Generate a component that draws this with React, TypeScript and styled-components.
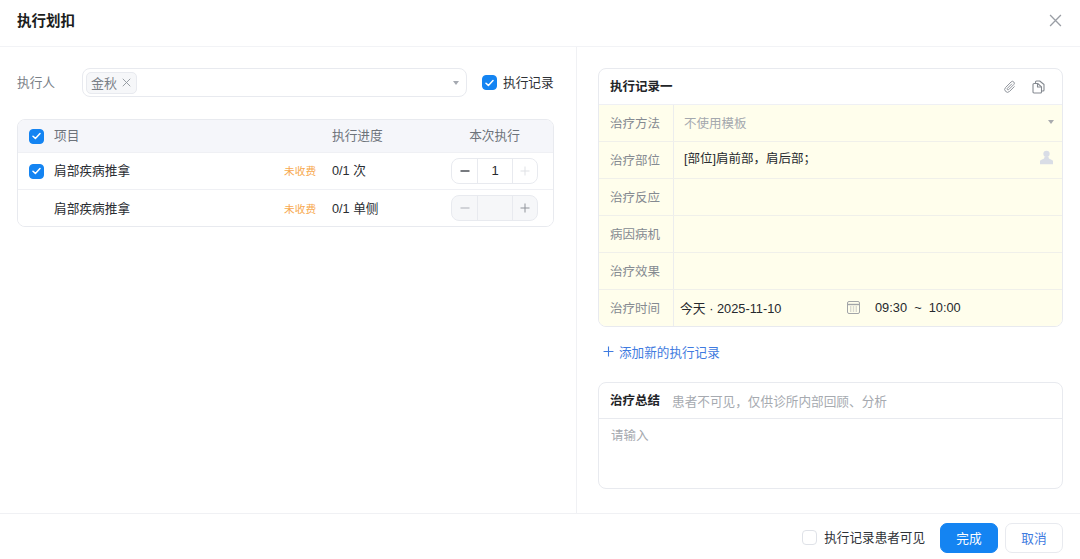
import React from "react";
import styled, { createGlobalStyle } from "styled-components";

const Global = createGlobalStyle`
  html, body { margin: 0; padding: 0; background: #fff; }
  body { font-family: "Liberation Sans", "Noto Sans CJK SC", sans-serif; font-size: 12.7px; color: #26292e; }
  * { box-sizing: border-box; }
`;

const Dialog = styled.div`
  width: 1080px; height: 559px; display: flex; flex-direction: column; overflow: hidden; background: #fff;
`;
const Header = styled.header`
  height: 47px; flex: none; display: flex; align-items: center; justify-content: space-between;
  padding: 0 18px 5px 17px; border-bottom: 1px solid #f2f3f6;
`;
const Title = styled.h1`
  margin: 0; font-size: 14.5px; line-height: 20px; font-weight: 600; color: #1b1d20;
`;
const Body = styled.main`
  flex: 1; display: flex; min-height: 0;
`;
const Left = styled.section`
  width: 577px; flex: none; padding: 21px 22px 0 17px; border-right: 1px solid #f0f1f4;
`;
const Right = styled.section`
  flex: 1; padding: 21px 17px 0 21px; display: flex; flex-direction: column;
`;
const ExecutorRow = styled.div`
  display: flex; align-items: center; height: 29px; margin-bottom: 22px;
`;
const FieldLabel = styled.span`
  width: 65px; flex: none; color: #7a8087; font-size: 12.7px; line-height: 20px;
`;
const Select = styled.div`
  width: 385px; flex: none; height: 29px; border: 1px solid #e8eaef; border-radius: 8px; display: flex; align-items: center;
  justify-content: space-between; padding: 0 7px 0 3px; margin-right: 15px;
`;
const Tag = styled.span`
  height: 22px; display: inline-flex; align-items: center; gap: 5px; padding: 0 5px 0 4px; background: #f6f7f9;
  border: 1px solid #e8eaef; border-radius: 5px; color: #7a8087; font-size: 13px;
`;
const Caret = styled.i<{ $color?: string }>`
  display: block; width: 0; height: 0; border-left: 3.5px solid transparent; border-right: 3.5px solid transparent;
  border-top: 4px solid ${p => p.$color || "#a5a9b1"};
`;
const Check = styled.span<{ $on?: boolean }>`
  width: 15px; height: 15px; flex: none; border-radius: 4px; display: inline-flex; align-items: center; justify-content: center;
  background: ${p => (p.$on ? "#1484f2" : "#fff")}; border: 1px solid ${p => (p.$on ? "#1484f2" : "#dfe2e8")};
`;
const CheckLabel = styled.label`
  display: inline-flex; align-items: center; gap: 6px; font-size: 12.7px; line-height: 20px; color: #2e3136; white-space: nowrap;
`;
const Table = styled.div`
  border: 1px solid #e8eaef; border-radius: 8px; overflow: hidden;
`;
const Row = styled.div<{ $head?: boolean }>`
  display: grid; grid-template-columns: 25px 1fr 48px 119px 102px; align-items: center; padding-left: 11px;
  height: ${p => (p.$head ? "33px" : "37px")};
  background: ${p => (p.$head ? "#f5f6fa" : "#fff")};
  color: ${p => (p.$head ? "#6d737b" : "#2a2d32")};
  font-size: 12.7px; line-height: 20px;
  border-bottom: 1px solid #eff0f4;
  &:last-child { border-bottom: 0; height: 36px; padding-top: 1px; }
`;
const Fee = styled.span`
  font-size: 10.7px; color: #f7a94f; white-space: nowrap;
`;
const HeadCenter = styled.span`
  text-align: center; padding-right: 15px; white-space: nowrap;
`;
const Stepper = styled.div<{ $off?: boolean }>`
  width: 87px; height: 26px; display: grid; grid-template-columns: 25px 36px 1fr; border: 1px solid #e8eaef; border-radius: 8px;
  overflow: hidden; background: ${p => (p.$off ? "#f6f7f9" : "#fff")}; margin-bottom: ${p => (p.$off ? "1px" : "0")};
`;
const StepCell = styled.span<{ $mid?: boolean }>`
  display: flex; align-items: center; justify-content: center; font-size: 13px; color: #26292e;
  ${p => p.$mid && "border-left: 1px solid #e8eaef; border-right: 1px solid #e8eaef;"}
`;
const Card = styled.div`
  border: 1px solid #e8eaef; border-radius: 8px; overflow: hidden; background: #fff;
`;
const CardHead = styled.div`
  height: 36px; display: flex; align-items: center; justify-content: space-between; padding: 0 17px 0 11px;
  border-bottom: 1px solid #eff0f4;
`;
const CardTitle = styled.span`
  font-size: 12.5px; font-weight: 600; line-height: 20px; color: #222428;
`;
const IconRow = styled.span`
  display: flex; gap: 15px; align-items: center;
`;
const RecordRow = styled.div`
  height: 37px; display: flex; background: #fffeec; border-bottom: 1px solid #f0f0ea;
  &:last-child { border-bottom: 0; height: 36px; }
`;
const RecordLabel = styled.span`
  width: 75px; flex: none; padding: 0 0 2px 11px; display: flex; align-items: center; color: #858a91; font-size: 12.5px;
  border-right: 1px solid #eceded;
`;
const RecordValue = styled.div<{ $muted?: boolean; $raised?: boolean }>`
  flex: 1; display: flex; align-items: center; justify-content: space-between;
  padding: 0 8px ${p => (p.$raised ? "5px" : "2px")} 10px; font-size: 12.5px;
  color: ${p => (p.$muted ? "#a4a8ae" : "#26292e")};
`;
const PersonSlot = styled.span`
  display: flex; margin-right: 1px;
`;
const TimeValue = styled.div`
  flex: 1; display: flex; align-items: center; padding: 0 0 2px 6px; font-size: 12.8px; color: #26292e;
`;
const DateText = styled.span`
  width: 167px; flex: none; white-space: pre;
`;
const TimeText = styled.span`
  margin-left: 15px; white-space: pre;
`;
const AddLink = styled.div`
  display: flex; align-items: center; gap: 5px; height: 20px; margin: 14px 0 21px 5px; color: #3f7be0; font-size: 12.6px;
`;
const SummaryHead = styled(CardHead)`
  justify-content: flex-start; gap: 12px; height: 36px; border-bottom-color: #e8eaef;
`;
const Hint = styled.span`
  color: #a6aab0; font-size: 12.65px;
`;
const SummaryBody = styled.div`
  height: 69px; padding: 7px 12px; color: #a6aab0; font-size: 12.5px; line-height: 20px;
`;
const Footer = styled.footer`
  height: 46px; flex: none; border-top: 1px solid #f0f1f4; display: flex; align-items: center; justify-content: flex-end;
  padding: 2px 17px 0 0;
`;
const FooterCheck = styled(CheckLabel)`
  margin-right: 15px; font-size: 12.6px; gap: 7px;
`;
const Button = styled.button<{ $primary?: boolean }>`
  width: 58px; height: 30px; border-radius: 7px; font: inherit; font-size: 12.7px; padding: 0; margin-left: ${p => (p.$primary ? "0" : "7px")};
  background: ${p => (p.$primary ? "#1484f2" : "#fff")}; color: ${p => (p.$primary ? "#fff" : "#3f7be0")};
  border: 1px solid ${p => (p.$primary ? "#1484f2" : "#e8eaef")};
`;

const Tick = () => (
  <svg width="9" height="8" viewBox="0 0 9 8" fill="none"><path d="M1 4.2 3.4 6.4 8 1.6" stroke="#fff" strokeWidth="1.5" strokeLinecap="round" strokeLinejoin="round" /></svg>
);
const Minus = ({ c }: { c: string }) => (
  <svg width="10" height="10" viewBox="0 0 10 10"><path d="M0.5 5h9" stroke={c} strokeWidth="1.3" /></svg>
);
const Plus = ({ c, s = 10 }: { c: string; s?: number }) => (
  <svg width={s} height={s} viewBox="0 0 10 10"><path d="M0.5 5h9M5 .5v9" stroke={c} strokeWidth="1" /></svg>
);
const Close = ({ s, c, w = 1.2 }: { s: number; c: string; w?: number }) => (
  <svg width={s} height={s} viewBox="0 0 12 12"><path d="M1 1l10 10M11 1 1 11" stroke={c} strokeWidth={w} /></svg>
);
const Clip = () => (
  <svg width="14" height="14" viewBox="0 0 14 15" fill="none" stroke="#8f949b" strokeWidth="1" strokeLinecap="round">
    <g transform="rotate(45 7 7.5)">
      <path d="M6 4v6.5a1 1 0 0 0 2 0V2.8a2 2 0 0 0-4 0v8.4a3 3 0 0 0 6 0V4" />
    </g>
  </svg>
);
const Copy = () => (
  <svg width="13" height="14" viewBox="0 0 13 14" fill="none" stroke="#858a91" strokeWidth="1.1" strokeLinejoin="round">
    <path d="M3.5 3.5V2a1 1 0 0 1 1-1h3.2L12 4.5V10a1 1 0 0 1-1 1H9.5" />
    <path d="M1 4.5a1 1 0 0 1 1-1h3.7l3.8 3.4V12a1 1 0 0 1-1 1H2a1 1 0 0 1-1-1z" />
    <path d="M5.5 3.7V7h3.8" />
  </svg>
);
const Person = () => (
  <svg width="13" height="15" viewBox="0 0 14 16" fill="#d9dde6"><circle cx="7" cy="4" r="3.4" /><path d="M5 7h4l.6 2.2L13.4 11c.4.2.6.6.6 1v3.4H0V12c0-.4.2-.8.6-1l3.8-1.8z" /></svg>
);
const Calendar = () => (
  <svg width="13" height="13" viewBox="0 0 13 13" fill="none"><rect x=".5" y=".5" width="12" height="12" rx="1.5" stroke="#a2a5a8" /><path d="M.5 3.5h12" stroke="#a2a5a8" strokeWidth="1.4" /><path d="M3 6h1.4M5.8 6h1.4M8.6 6H10M3 8h1.4M5.8 8h1.4M8.6 8H10M3 10h1.4M5.8 10h1.4M8.6 10H10" stroke="#b4b6b8" /></svg>
);

const records = ["治疗反应", "病因病机", "治疗效果"];

export default function App() {
  return (
    <Dialog>
      <Global />
      <Header>
        <Title>执行划扣</Title>
        <Close s={13} c="#9a9ea5" />
      </Header>
      <Body>
        <Left>
          <ExecutorRow>
            <FieldLabel>执行人</FieldLabel>
            <Select>
              <Tag>金秋 <Close s={9} c="#8f949b" /></Tag>
              <Caret />
            </Select>
            <CheckLabel><Check $on><Tick /></Check>执行记录</CheckLabel>
          </ExecutorRow>
          <Table>
            <Row $head>
              <Check $on><Tick /></Check>
              <span>项目</span>
              <span />
              <span>执行进度</span>
              <HeadCenter>本次执行</HeadCenter>
            </Row>
            <Row>
              <Check $on><Tick /></Check>
              <span>肩部疾病推拿</span>
              <Fee>未收费</Fee>
              <span>0/1 次</span>
              <Stepper>
                <StepCell><Minus c="#4a4e54" /></StepCell>
                <StepCell $mid>1</StepCell>
                <StepCell><Plus c="#dfe1e5" /></StepCell>
              </Stepper>
            </Row>
            <Row>
              <span />
              <span>肩部疾病推拿</span>
              <Fee>未收费</Fee>
              <span>0/1 单侧</span>
              <Stepper $off>
                <StepCell><Minus c="#c4c7cd" /></StepCell>
                <StepCell $mid />
                <StepCell><Plus c="#8f939a" /></StepCell>
              </Stepper>
            </Row>
          </Table>
        </Left>
        <Right>
          <Card>
            <CardHead>
              <CardTitle>执行记录一</CardTitle>
              <IconRow><Clip /><Copy /></IconRow>
            </CardHead>
            <RecordRow>
              <RecordLabel>治疗方法</RecordLabel>
              <RecordValue $muted>不使用模板<Caret $color="#a9abae" /></RecordValue>
            </RecordRow>
            <RecordRow>
              <RecordLabel>治疗部位</RecordLabel>
              <RecordValue $raised>[部位]肩前部，肩后部；<PersonSlot><Person /></PersonSlot></RecordValue>
            </RecordRow>
            {records.map(r => (
              <RecordRow key={r}>
                <RecordLabel>{r}</RecordLabel>
                <RecordValue />
              </RecordRow>
            ))}
            <RecordRow>
              <RecordLabel>治疗时间</RecordLabel>
              <TimeValue>
                <DateText>今天 · 2025-11-10</DateText>
                <Calendar />
                <TimeText>09:30  ~  10:00</TimeText>
              </TimeValue>
            </RecordRow>
          </Card>
          <AddLink><Plus c="#3f7be0" s={11} />添加新的执行记录</AddLink>
          <Card>
            <SummaryHead>
              <CardTitle>治疗总结</CardTitle>
              <Hint>患者不可见，仅供诊所内部回顾、分析</Hint>
            </SummaryHead>
            <SummaryBody>请输入</SummaryBody>
          </Card>
        </Right>
      </Body>
      <Footer>
        <FooterCheck><Check />执行记录患者可见</FooterCheck>
        <Button $primary>完成</Button>
        <Button>取消</Button>
      </Footer>
    </Dialog>
  );
}
